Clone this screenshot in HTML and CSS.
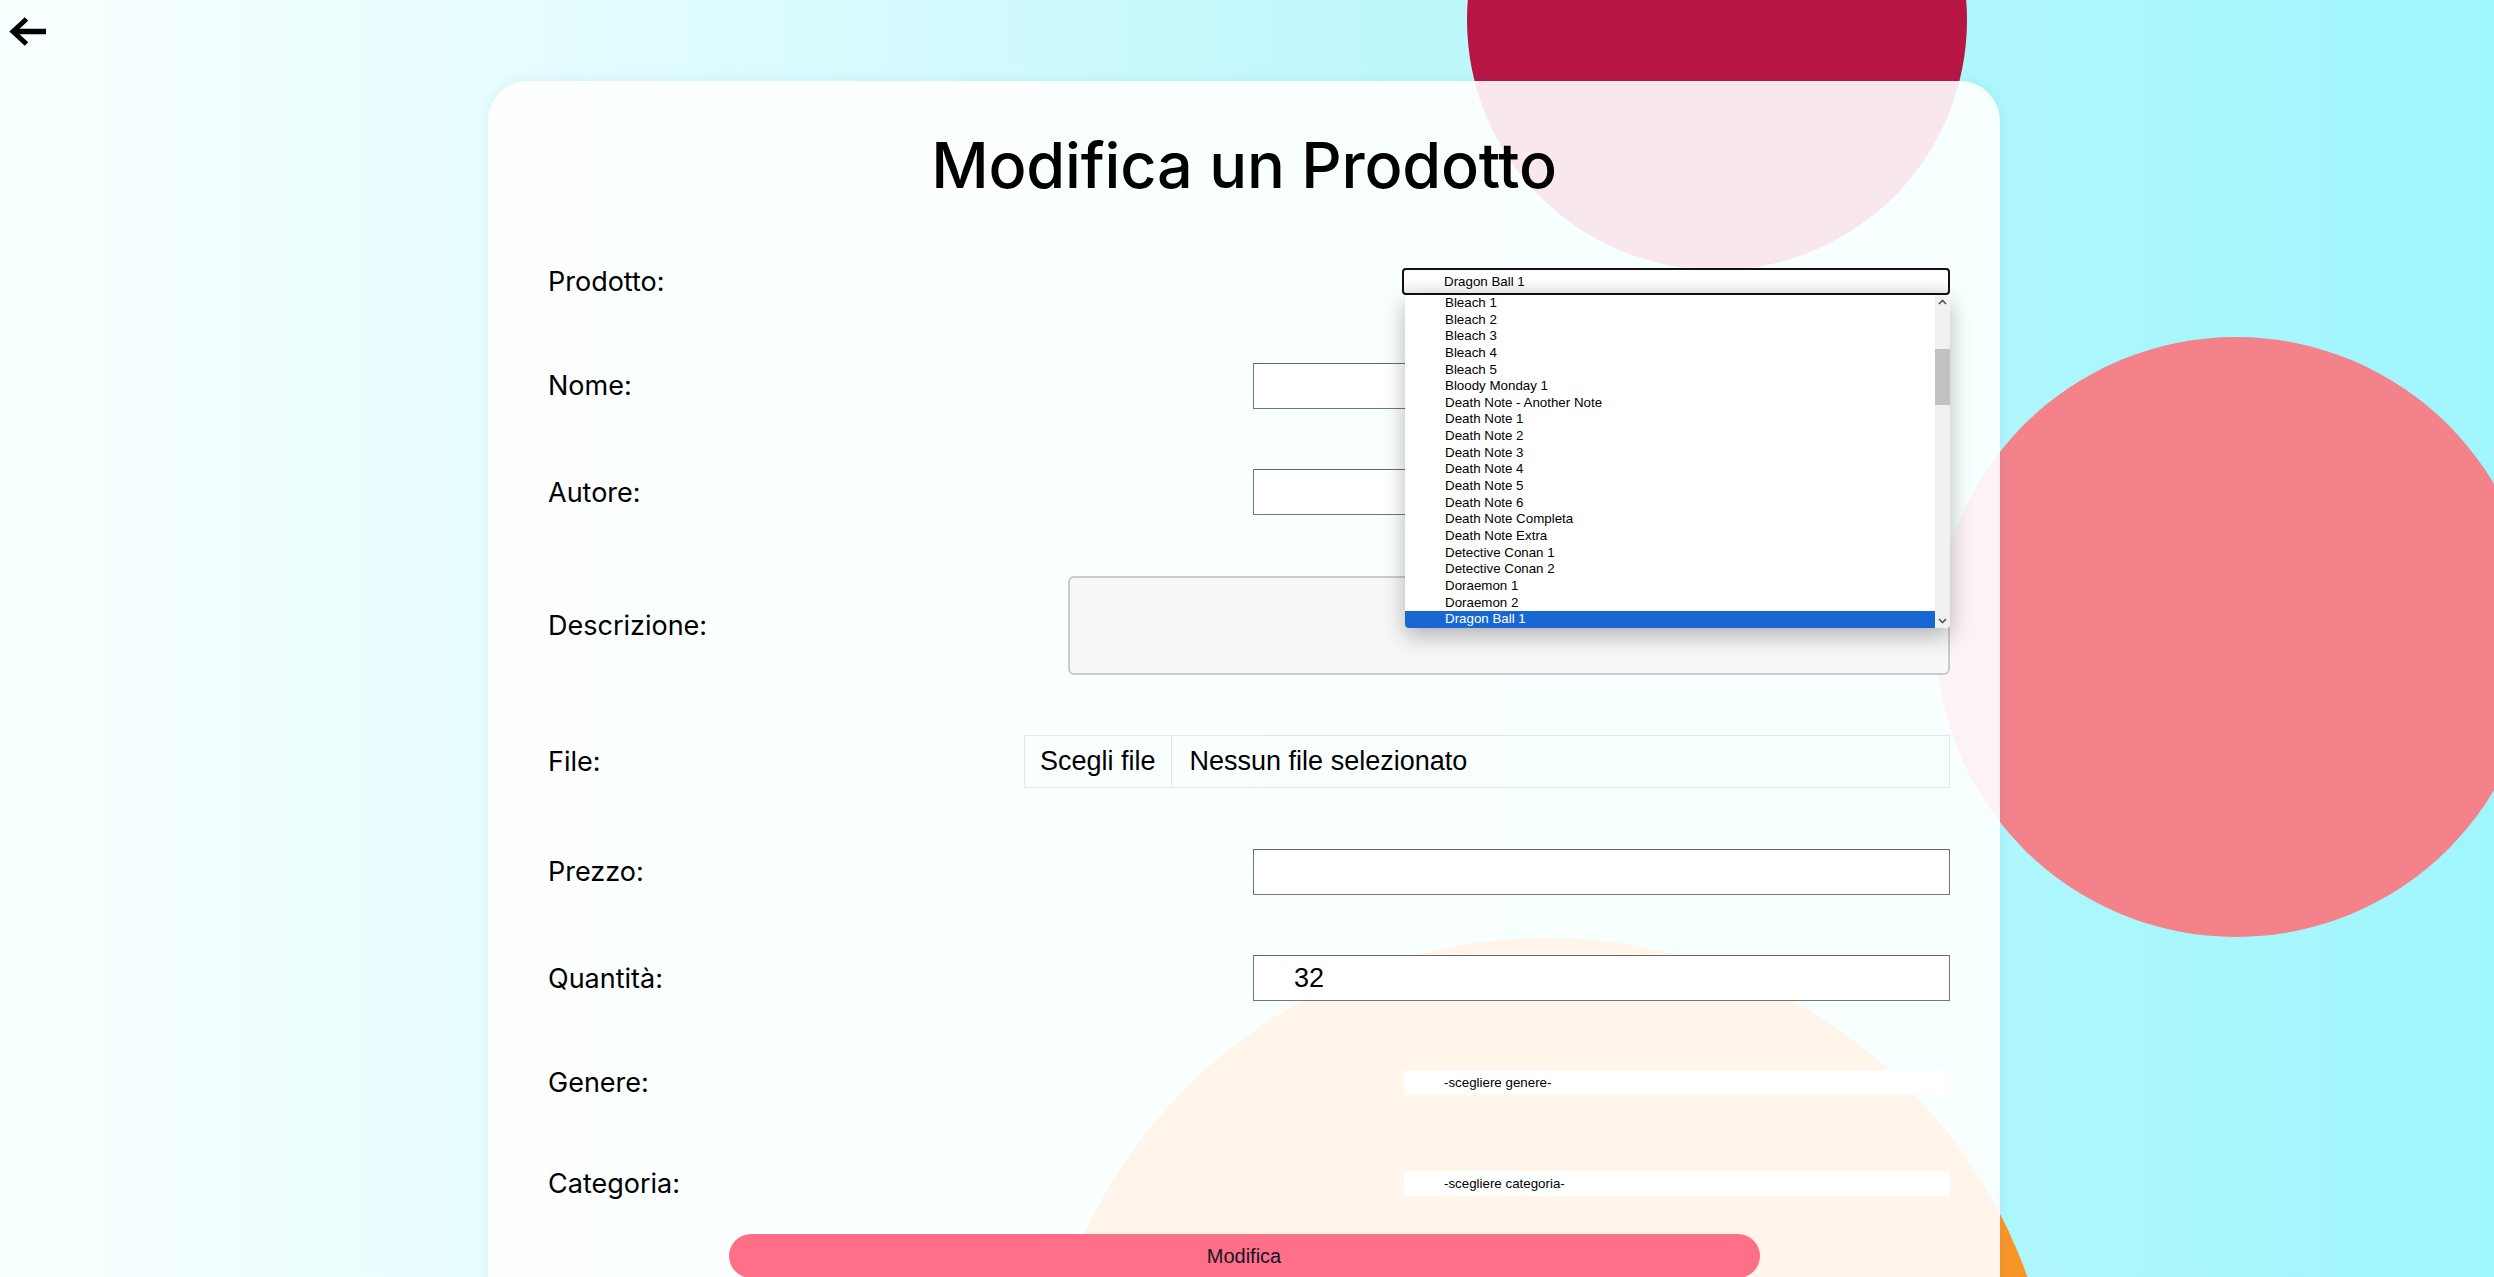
FILE: index.html
```html
<!DOCTYPE html>
<html lang="it">
<head>
<meta charset="utf-8">
<title>Modifica un Prodotto</title>
<link rel="stylesheet" href="styles.css">
</head>
<body>
<div class="blobs">
  <div class="blob blob-red"></div>
  <div class="blob blob-pink"></div>
  <div class="blob blob-orange"></div>
</div>

<header class="topbar">
  <a class="back" href="#" aria-label="Indietro">
    <svg width="40" height="32" viewBox="0 0 40 32">
      <path d="M38 15.5 H5" fill="none" stroke="#000" stroke-width="5.5"/>
      <path d="M18.5 3 L5 15.5 L18.5 28" fill="none" stroke="#000" stroke-width="5"/>
    </svg>
  </a>
</header>

<main class="card">
  <h1 class="title">Modifica un Prodotto</h1>
  <form class="form">
    <div class="row">
      <span class="label">Prodotto:</span>
      <div class="select-wrap">
        <div class="select select-open">Dragon Ball 1</div>
        <div class="dropdown">
          <ul class="options">
            <li>Bleach 1</li>
            <li>Bleach 2</li>
            <li>Bleach 3</li>
            <li>Bleach 4</li>
            <li>Bleach 5</li>
            <li>Bloody Monday 1</li>
            <li>Death Note - Another Note</li>
            <li>Death Note 1</li>
            <li>Death Note 2</li>
            <li>Death Note 3</li>
            <li>Death Note 4</li>
            <li>Death Note 5</li>
            <li>Death Note 6</li>
            <li>Death Note Completa</li>
            <li>Death Note Extra</li>
            <li>Detective Conan 1</li>
            <li>Detective Conan 2</li>
            <li>Doraemon 1</li>
            <li>Doraemon 2</li>
            <li class="selected">Dragon Ball 1</li>
          </ul>
          <div class="scrollbar">
            <svg class="arrow-up" width="9" height="6" viewBox="0 0 9 6"><path d="M1 5 L4.5 1.5 L8 5" fill="none" stroke="#555" stroke-width="1.6"/></svg>
            <div class="thumb"></div>
            <svg class="arrow-down" width="9" height="6" viewBox="0 0 9 6"><path d="M1 1 L4.5 4.5 L8 1" fill="none" stroke="#555" stroke-width="1.6"/></svg>
          </div>
        </div>
      </div>
    </div>

    <div class="row">
      <span class="label">Nome:</span>
      <div class="text-input"></div>
    </div>

    <div class="row">
      <span class="label">Autore:</span>
      <div class="text-input"></div>
    </div>

    <div class="row">
      <span class="label">Descrizione:</span>
      <div class="textarea"></div>
    </div>

    <div class="row">
      <span class="label">File:</span>
      <div class="file">
        <span class="file-btn">Scegli file</span>
        <span class="file-name">Nessun file selezionato</span>
      </div>
    </div>

    <div class="row">
      <span class="label">Prezzo:</span>
      <div class="text-input"></div>
    </div>

    <div class="row">
      <span class="label">Quantità:</span>
      <div class="text-input">32</div>
    </div>

    <div class="row">
      <span class="label">Genere:</span>
      <div class="plain-select">-scegliere genere-</div>
    </div>

    <div class="row">
      <span class="label">Categoria:</span>
      <div class="plain-select">-scegliere categoria-</div>
    </div>
  </form>
  <button class="submit" type="button">Modifica</button>
</main>
</body>
</html>
```

FILE: styles.css
```css
html, body {
  margin: 0;
  padding: 0;
  height: 1277px;
  overflow: hidden;
}

body {
  position: relative;
  padding-right: 6px;
  box-sizing: border-box;
  background: linear-gradient(90deg, #f8ffff 3%, #dcfbfe 30%, #bff8fc 55%, #a0f6fd 100%);
  font-family: Inter, "Noto Sans", sans-serif;
  color: #000;
}

.blobs {
  position: absolute;
  inset: 0;
  z-index: 0;
}

.blob {
  position: absolute;
  border-radius: 50%;
}

.blob-red {
  left: 1467px;
  top: -230px;
  width: 500px;
  height: 500px;
  background: #b71645;
}

.blob-pink {
  left: 1936px;
  top: 337px;
  width: 600px;
  height: 600px;
  background: #f4828b;
}

.blob-orange {
  left: 1037px;
  top: 938px;
  width: 1020px;
  height: 1020px;
  background: #f8962a;
}

.topbar {
  position: relative;
  z-index: 1;
  height: 81px;
  box-sizing: border-box;
  padding: 16px 0 0 8px;
}

.back {
  display: inline-block;
  line-height: 0;
}

.card {
  position: relative;
  z-index: 1;
  width: 1512px;
  margin: 0 auto;
  min-height: 1300px;
  box-sizing: border-box;
  padding-top: 53px;
  background: rgba(255, 255, 255, 0.9);
  border-radius: 40px 40px 0 0;
  box-shadow: 0 0 14px rgba(0, 90, 110, 0.07);
}

.title {
  margin: 0;
  text-align: center;
  font-size: 63px;
  line-height: 62px;
  font-weight: 500;
  letter-spacing: -0.2px;
}

.form {
  display: flex;
  flex-direction: column;
  gap: 60.5px;
  margin-top: 65px;
  padding: 0 50px 0 60px;
}

.row {
  display: flex;
  align-items: center;
  justify-content: space-between;
  min-height: 41px;
}

.label {
  font-size: 27px;
  line-height: 41px;
  font-weight: 400;
}

.select-wrap {
  position: relative;
  width: 548px;
}

.select {
  height: 27px;
  box-sizing: border-box;
  border: 2px solid #111;
  border-radius: 4px;
  background: linear-gradient(#ffffff 40%, #efefef);
  padding-left: 40px;
  font-family: "Liberation Sans", Arial, sans-serif;
  font-size: 13.33px;
  line-height: 23px;
}

.dropdown {
  position: absolute;
  top: 27px;
  left: 3px;
  right: 0;
  height: 333px;
  display: flex;
  background: #fff;
  border-radius: 4px;
  box-shadow: 0 8px 22px rgba(0, 0, 0, 0.28);
  overflow: hidden;
  z-index: 5;
}

.options {
  list-style: none;
  margin: 0;
  padding: 0;
  flex: 1;
  font-family: "Liberation Sans", Arial, sans-serif;
  font-size: 13.33px;
}

.options li {
  height: 16.65px;
  line-height: 16.65px;
  padding-left: 40px;
  white-space: nowrap;
}

.options li.selected {
  background: #1967d2;
  color: #fff;
}

.scrollbar {
  position: relative;
  width: 15px;
  background: #f1f1f1;
}

.thumb {
  position: absolute;
  left: 0;
  right: 0;
  top: 54px;
  height: 56px;
  background: #c1c1c1;
}

.arrow-up {
  position: absolute;
  left: 3px;
  top: 4px;
}

.arrow-down {
  position: absolute;
  left: 3px;
  bottom: 4px;
}

.text-input {
  width: 697px;
  height: 46px;
  box-sizing: border-box;
  border: 1px solid #767676;
  border-top-color: #6a6a6a;
  background: #fff;
  padding-left: 40px;
  font-family: "Liberation Sans", Arial, sans-serif;
  font-size: 27px;
  line-height: 44px;
}

.textarea {
  width: 882px;
  height: 99px;
  box-sizing: border-box;
  border: 2px solid #cbcbcb;
  border-radius: 6px;
  background: #f7f7f7;
}

.file {
  width: 926px;
  height: 53px;
  box-sizing: border-box;
  display: flex;
  align-items: center;
  border: 1px solid #e2e7e9;
  font-family: "Liberation Sans", Arial, sans-serif;
  font-size: 27px;
}

.file-btn {
  height: 100%;
  display: flex;
  align-items: center;
  padding: 0 15px;
  border-right: 1px solid #e2e7e9;
}

.file-name {
  padding-left: 18px;
}

.plain-select {
  width: 546px;
  height: 25px;
  box-sizing: border-box;
  background: #fff;
  padding-left: 40px;
  font-family: "Liberation Sans", Arial, sans-serif;
  font-size: 13.33px;
  line-height: 25px;
}

.submit {
  display: block;
  width: 1031px;
  height: 44px;
  margin: 30px auto 0;
  border: none;
  border-radius: 22px;
  background: #ff6f87;
  color: #15152a;
  font-family: "Liberation Sans", Arial, sans-serif;
  font-size: 20px;
  padding: 0;
  line-height: 44px;
}
```
